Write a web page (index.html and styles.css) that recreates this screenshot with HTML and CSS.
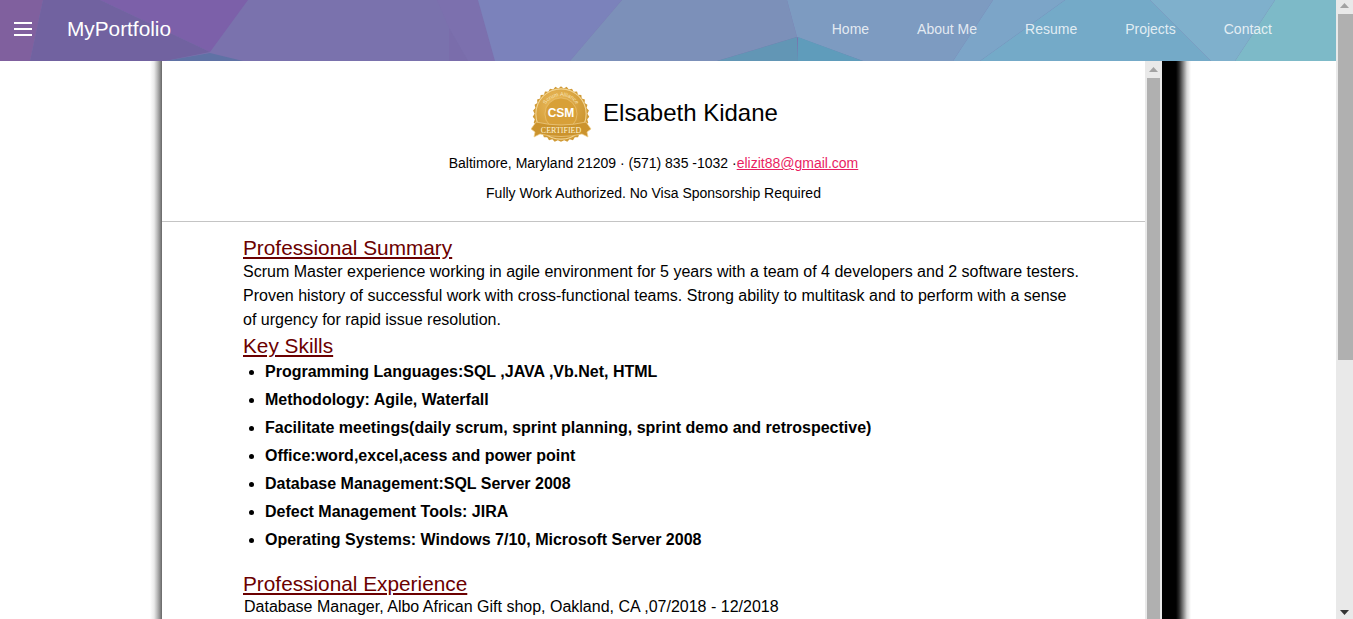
FILE: index.html
```html
<!DOCTYPE html>
<html lang="en">
<head>
<meta charset="utf-8">
<title>MyPortfolio</title>
<link rel="stylesheet" href="styles.css">
</head>
<body>
<div class="page">
  <header class="topbar">
    <svg class="topbar-art" viewBox="0 0 1336 61" preserveAspectRatio="none" aria-hidden="true">
      <rect width="1336" height="61" fill="#7a72ad"/>
      <polygon points="0,0 43,0 30,61 0,61" fill="#80609e"/>
      <polygon points="100,0 248,0 210,52" fill="#7c60a9"/>
      <polygon points="43,0 100,0 210,52 165,61 30,61" fill="#7162a0"/>
      <polygon points="165,61 210,53 243,61" fill="#5f72a5"/>
      <polygon points="437,0 478,0 495,61 468,61 449,28" fill="#7c70ae"/>
      <polygon points="449,28 468,61 449,61" fill="#7a6dab"/>
      <polygon points="478,0 622,0 570,61 495,61" fill="#7b82bb"/>
      <polygon points="622,0 787,0 797,37 717,61 570,61" fill="#7c90b9"/>
      <polygon points="787,0 993,0 953,61 863,61 797,37" fill="#7d9bc1"/>
      <polygon points="717,61 797,37 798,61" fill="#6296b5"/>
      <polygon points="798,37 863,61 798,61" fill="#5f9cbb"/>
      <polygon points="993,0 1065,0 980,61 953,61" fill="#7ca5c8"/>
      <polygon points="1065,0 1150,0 1211,61 980,61" fill="#74aac8"/>
      <polygon points="1150,0 1275,0 1235,61 1211,61" fill="#7fb0cc"/>
      <polygon points="1275,0 1336,0 1336,61 1235,61" fill="#7dbac8"/>
    </svg>
    <button class="menu-btn" type="button" aria-label="Menu"><span></span><span></span><span></span></button>
    <a class="brand" href="#">MyPortfolio</a>
    <nav class="links">
      <a href="#">Home</a>
      <a href="#">About Me</a>
      <a href="#">Resume</a>
      <a href="#">Projects</a>
      <a href="#">Contact</a>
    </nav>
  </header>
  <main class="sheet">
    <div class="resume">
      <section class="head">
        <div class="identity">
          <svg class="badge" viewBox="0 0 62 58" aria-label="Certified Scrum Master badge">
            <defs>
              <radialGradient id="gold" cx=".4" cy=".3" r=".8">
                <stop offset="0" stop-color="#ecbb5c"/>
                <stop offset="1" stop-color="#c58d27"/>
              </radialGradient>
              <path id="arc" d="M12 29 A18 18 0 0 1 48 29"/>
            </defs>
            <g transform="translate(30 29) scale(1.070) translate(-31 -26)">
              <polygon fill="#d09a35" points="31,0 33.500,2.200 36.300,.6 38.300,3.200 41.300,2.300 42.800,5.200 46,4.900 46.900,8 50,8.300 50.400,11.500 53.300,12.500 53.100,15.700 55.700,17.400 54.900,20.500 57.100,22.800 55.700,25.700 57.400,28.500 55.500,31 56.500,34.100 54,36.100 54.400,39.300 51.500,40.700 51.200,43.900 48,44.700 47,47.800 43.900,47.800 42.200,50.500 39.100,49.700 36.900,52 34,50.600 31,52 28,50.600 25.100,52 22.900,49.700 19.800,50.500 18.100,47.800 15,47.800 14,44.700 10.800,43.900 10.500,40.700 7.600,39.300 8,36.100 5.500,34.100 6.500,31 4.600,28.500 6.300,25.700 4.900,22.800 7.100,20.500 6.300,17.400 8.900,15.700 8.700,12.500 11.600,11.500 12,8.300 15.100,8 16,4.900 19.200,5.200 20.700,2.300 23.700,3.200 25.700,.6 28.500,2.200"/>
              <circle cx="31" cy="26" r="23.500" fill="url(#gold)" stroke="#f3d593" stroke-width="1"/>
              <circle cx="31" cy="26" r="15" fill="#d8a038" stroke="#eec77c" stroke-width=".6"/>
            </g>
            <text class="badge-arc"><textPath href="#arc" startOffset="50%" text-anchor="middle">Scrum Alliance</textPath></text>
            <text class="badge-csm" x="30" y="32" text-anchor="middle">CSM</text>
            <path d="M0 44 L5 37 Q30 43 55 37 L60 44 L56 47 L57 52 L51 49 Q30 54 9 49 L3 52 L4 47 Z" fill="#cb932d" stroke="#f0d08c" stroke-width=".7"/>
            <text class="badge-cert" x="30" y="47.500" text-anchor="middle">CERTIFIED</text>
          </svg>
          <h1 class="name">Elsabeth Kidane</h1>
        </div>
        <p class="contact">Baltimore, Maryland 21209 · (571) 835 -1032 ·<a href="#">elizit88@gmail.com</a></p>
        <p class="auth">Fully Work Authorized. No Visa Sponsorship Required</p>
      </section>
      <hr class="rule">
      <section class="body-copy">
        <h2 class="title">Professional Summary</h2>
        <p class="summary">Scrum Master experience working in agile environment for 5 years with a team of 4 developers and 2 software testers. Proven history of successful work with cross-functional teams. Strong ability to multitask and to perform with a sense of urgency for rapid issue resolution.</p>
        <h2 class="title skills-title">Key Skills</h2>
        <ul class="skills">
          <li>Programming Languages:SQL ,JAVA ,Vb.Net, HTML</li>
          <li>Methodology: Agile, Waterfall</li>
          <li>Facilitate meetings(daily scrum, sprint planning, sprint demo and retrospective)</li>
          <li>Office:word,excel,acess and power point</li>
          <li>Database Management:SQL Server 2008</li>
          <li>Defect Management Tools: JIRA</li>
          <li>Operating Systems: Windows 7/10, Microsoft Server 2008</li>
        </ul>
        <h2 class="title exp-title">Professional Experience</h2>
        <p class="job">Database Manager, Albo African Gift shop, Oakland, CA ,07/2018 - 12/2018</p>
      </section>
    </div>
    <div class="rail rail-inner" aria-hidden="true">
      <div class="rail-btn">
        <svg class="arrow" viewBox="0 0 9 5"><path d="M4.500 0L9 5H0z" fill="#a3a3a3"/></svg>
      </div>
      <div class="thumb thumb-inner"></div>
    </div>
  </main>
</div>
<div class="rail rail-page" aria-hidden="true">
  <div class="rail-btn">
    <svg class="arrow" viewBox="0 0 9 5"><path d="M4.500 0L9 5H0z" fill="#a3a3a3"/></svg>
  </div>
  <div class="track">
    <div class="thumb thumb-page"></div>
  </div>
  <div class="rail-btn rail-btn-end">
    <svg class="arrow" viewBox="0 0 9 5"><path d="M0 0H9L4.500 5z" fill="#333"/></svg>
  </div>
</div>
</body>
</html>
```
FILE: styles.css
```css
html {
  height: 100%;
  overflow: hidden;
}

body {
  display: flex;
  height: 100%;
  margin: 0;
  overflow: hidden;
  background: #fff;
  color: #000;
  font-family: "Liberation Sans", Arial, sans-serif;
}

.page {
  display: flex;
  flex: 1;
  flex-direction: column;
  min-width: 0;
}

/* scrollbars */
.rail {
  display: flex;
  flex: none;
  flex-direction: column;
  width: 17px;
  background: #e9e9e9;
}

.rail-btn {
  display: flex;
  flex: none;
  justify-content: center;
}

.arrow {
  display: block;
  width: 9px;
  height: 5px;
}

.rail-page .rail-btn {
  height: 14px;
  padding-top: 3px;
  box-sizing: border-box;
}

.rail-page .rail-btn-end {
  padding-top: 5px;
}

.rail-inner .rail-btn {
  height: 17px;
  padding-top: 6px;
  box-sizing: border-box;
}

.track {
  flex: 1;
}

.thumb {
  background: #b0b0b0;
}

.thumb-page {
  height: 346px;
  margin-left: 2px;
}

.thumb-inner {
  flex: 1;
  margin: 0 2px;
}

/* top bar */
.topbar {
  position: relative;
  z-index: 2;
  display: flex;
  flex: none;
  align-items: center;
  height: 61px;
  padding: 0 64px 3px 14px;
  box-sizing: border-box;
  overflow: hidden;
}

.topbar-art {
  position: absolute;
  inset: 0;
  width: 100%;
  height: 100%;
}

.menu-btn {
  position: relative;
  display: flex;
  flex-direction: column;
  gap: 4px;
  width: 18px;
  margin-right: 35px;
  padding: 0;
  border: 0;
  background: none;
}

.menu-btn span {
  height: 2px;
  background: #fff;
}

.brand {
  position: relative;
  color: #fff;
  font-size: 20.800px;
  text-decoration: none;
}

.links {
  position: relative;
  display: flex;
  gap: 48px;
  margin-left: auto;
}

.links a {
  color: rgba(255, 255, 255, 0.8);
  font-size: 14px;
  text-decoration: none;
}

/* resume sheet */
.sheet {
  position: relative;
  display: flex;
  flex: 1;
  width: 1000px;
  min-height: 0;
  margin-left: 162px;
  background: #fff;
}

.sheet::before,
.sheet::after {
  content: "";
  position: absolute;
  top: 0;
  bottom: 0;
}

.sheet::before {
  right: 100%;
  width: 12px;
  background: linear-gradient(to left, rgba(0, 0, 0, 0.6), rgba(0, 0, 0, 0.45) 2px, rgba(0, 0, 0, 0.25) 5px, rgba(0, 0, 0, 0.08) 8px, transparent 12px);
}

.sheet::after {
  left: 100%;
  width: 29px;
  background: linear-gradient(to right, #000 14px, rgba(0, 0, 0, 0.85) 17px, rgba(0, 0, 0, 0.5) 21px, rgba(0, 0, 0, 0.15) 25px, transparent 29px);
}

.resume {
  flex: 1;
  min-width: 0;
  overflow-y: auto;
  scrollbar-width: none;
}

.head {
  padding-top: 24px;
  text-align: center;
}

.identity {
  display: flex;
  justify-content: center;
  align-items: center;
  gap: 10px;
  height: 58px;
  padding-left: 2px;
}

.badge {
  width: 62px;
  height: 58px;
}

.badge-arc {
  fill: #f6e2b5;
  font-size: 5.500px;
  font-family: "Liberation Sans", Arial, sans-serif;
}

.badge-csm {
  fill: #fff;
  font-size: 12px;
  font-weight: 700;
  font-family: "Liberation Sans", Arial, sans-serif;
}

.badge-cert {
  fill: #fff3d6;
  font-size: 8px;
  font-family: "Liberation Serif", serif;
}

.name {
  margin: 0 0 3px;
  font-size: 24px;
  font-weight: 400;
  line-height: 28px;
}

.contact {
  margin: 12px 0 0;
  font-size: 14px;
  line-height: 16px;
}

.contact a {
  color: #e91e63;
}

.auth {
  margin: 14px 0 0;
  font-size: 14px;
  line-height: 16px;
}

.rule {
  margin: 20px 0 0;
  border: 0;
  border-top: 1px solid #c4c4c4;
}

.body-copy {
  padding: 15px 64px 0 81px;
}

.title {
  margin: 0;
  padding-bottom: 2px;
  color: #6b0000;
  font-size: 20.800px;
  font-weight: 400;
  line-height: 21px;
  text-decoration: underline;
}

.summary {
  margin: 0;
  font-size: 16px;
  line-height: 24px;
}

.skills-title {
  margin-top: 3px;
}

.skills {
  margin: 0;
  padding-left: 22px;
  font-size: 16px;
  font-weight: 700;
}

.skills li {
  line-height: 28px;
}

.exp-title {
  margin-top: 19px;
}

.job {
  margin: 0 0 0 1px;
  font-size: 16px;
  line-height: 22px;
}
```
